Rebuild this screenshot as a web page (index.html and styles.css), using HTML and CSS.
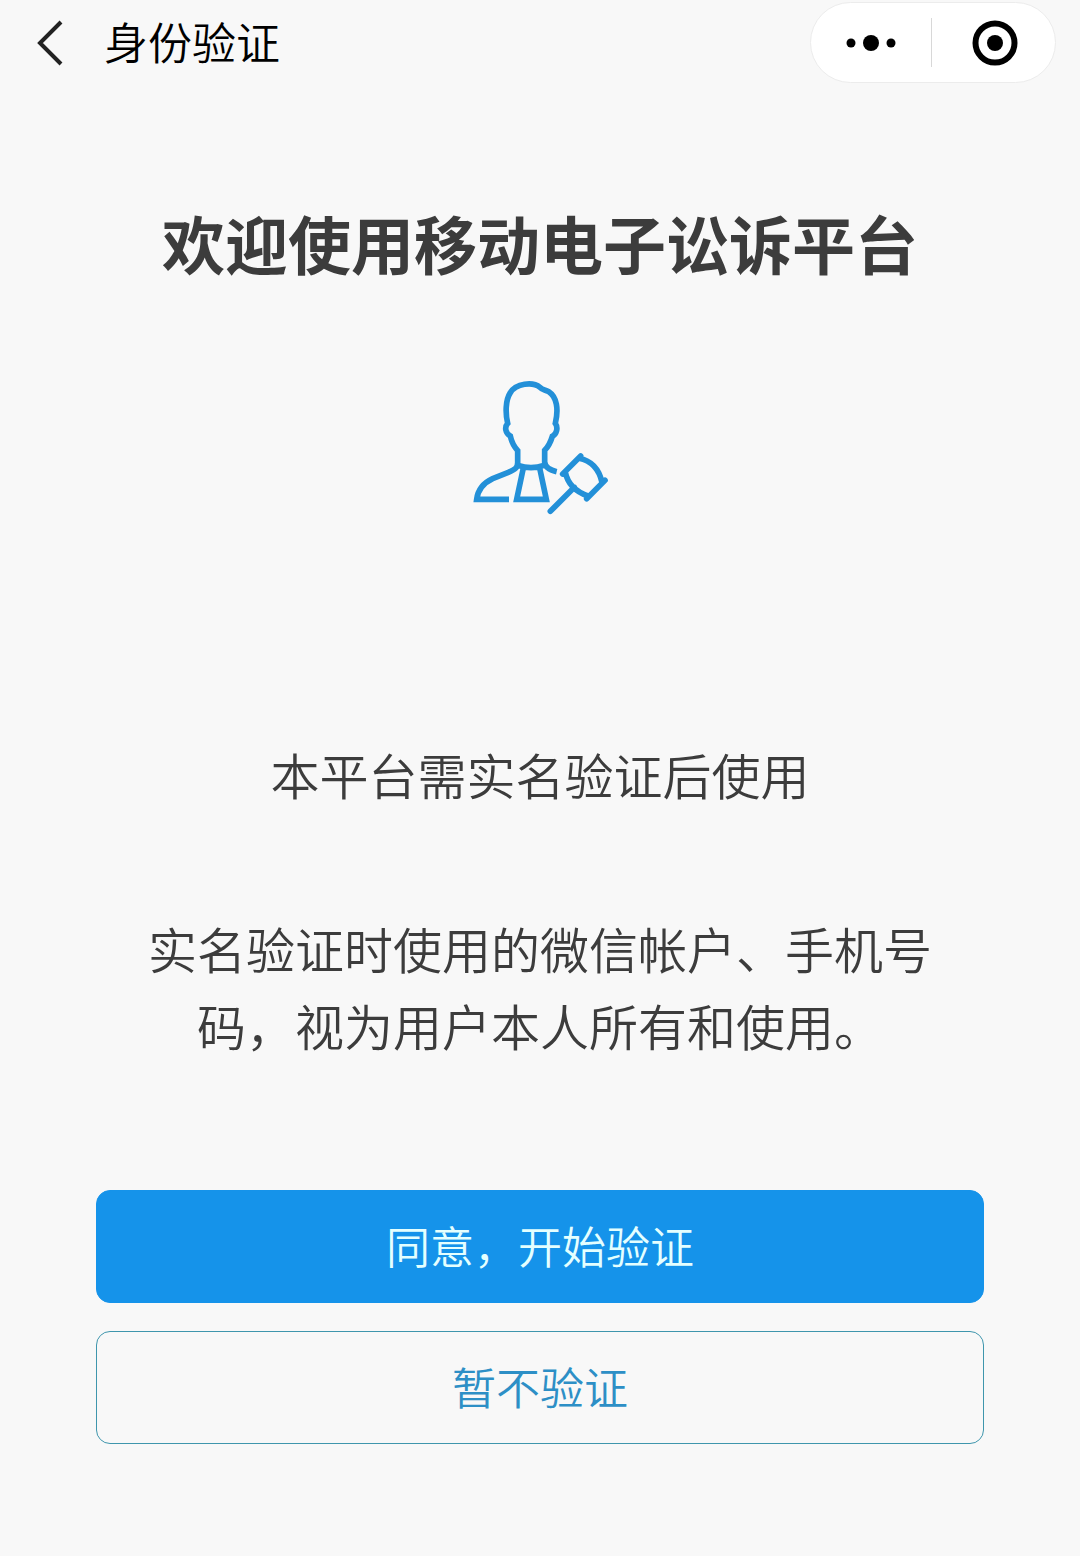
FILE: index.html
```
<!DOCTYPE html>
<html lang="zh-CN">
<head>
	<meta charset="utf-8">
	<meta name="viewport" content="width=device-width, initial-scale=1">
	<link rel="stylesheet" href="styles.css">
	<title>身份验证</title>
</head>
<body>
	<header class="navbar">
		<a class="back" href="#" aria-label="返回">
			<svg width="28" height="46" viewBox="0 0 28 46"><path d="M25 2L4 23L25 44"/></svg>
		</a>
		<span class="navbar-title">身份验证</span>
		<div class="capsule">
			<button type="button" aria-label="更多">
				<svg width="50" height="46" viewBox="0 0 50 46">
					<circle cx="5" cy="23" r="4.5"/>
					<circle cx="25" cy="23" r="8"/>
					<circle cx="45" cy="23" r="4.5"/>
				</svg>
			</button>
			<button type="button" aria-label="关闭">
				<svg width="46" height="46" viewBox="0 0 46 46">
					<circle class="ring" cx="23" cy="23" r="19.5"/>
					<circle cx="23" cy="23" r="8"/>
				</svg>
			</button>
		</div>
	</header>
	<main class="content">
		<h1>欢迎使用移动电子讼诉平台</h1>
		<svg class="judge" width="136" height="136" viewBox="36 30 408 408">
			<!-- head and shoulders -->
			<path d="M147 388H50C54 358 70 339 98 326L145 307C164 299 173 294 173 278V242C160 227 154 213 151 198C136 190 133 171 143 160C136 130 136 91 151 68C168 40 218 34 240 52C248 61 255 58 266 65C291 81 296 118 286 160C295 173 290 193 277 199C271 219 265 230 254 241V276C255 293 269 300 290 305"/>
			<!-- collar -->
			<path d="M174 286Q213 300 252 286M190 294L170 388H259L239 294"/>
			<!-- gavel -->
			<path class="gavel" d="M308 312L362 258M380 386L435 331M316 307Q326 357 384 378M357 265Q412 276 426 337M343 352L271 424"/>
		</svg>
		<p class="lead">本平台需实名验证后使用</p>
		<p class="notice">实名验证时使用的微信帐户、手机号码，视为用户本人所有和使用。</p>
		<div class="actions">
			<button type="button" class="btn btn-primary">同意，开始验证</button>
			<button type="button" class="btn btn-outline">暂不验证</button>
		</div>
	</main>
</body>
</html>
```
FILE: styles.css
```
*{
	box-sizing: border-box;
}
body{
	margin: 0;
	background-color: #f8f8f8;
	color: #3c3c3c;
	font-family: 'Noto Sans CJK SC', sans-serif;
	font-weight: 350;
}
button{
	font: inherit;
	cursor: pointer;
}
.navbar{
	display: flex;
	align-items: center;
	padding: 2px 24px 0 36px;
	color: #000;
}
.back{
	display: flex;
}
.back path{
	fill: none;
	stroke: #222;
	stroke-width: 4;
}
.navbar-title{
	margin-left: 40px;
	padding-bottom: 4px;
	font-size: 44px;
	line-height: 64px;
}
.capsule{
	display: flex;
	width: 246px;
	height: 81px;
	margin-left: auto;
	border: 1px solid #ececec;
	border-radius: 41px;
	background-color: #fff;
}
.capsule button{
	display: flex;
	flex: 1;
	align-items: center;
	justify-content: center;
	position: relative;
	padding: 0;
	border: 0;
	background: none;
}
.capsule button + button{
	padding-left: 5px;
}
.capsule button + button::before{
	content: '';
	position: absolute;
	left: 0;
	top: 15px;
	bottom: 15px;
	width: 1px;
	background-color: #d8d8d8;
}
.capsule .ring{
	fill: none;
	stroke: #000;
	stroke-width: 6;
}
.content{
	display: flex;
	flex-direction: column;
	align-items: center;
	padding: 121px 96px 112px;
	text-align: center;
}
h1{
	margin: 0;
	font-size: 63px;
	font-weight: bold;
	line-height: 76px;
}
.judge{
	margin-top: 100px;
	fill: none;
	stroke: #2390d8;
	stroke-width: 17;
}
.judge .gavel{
	stroke-linecap: round;
}
.lead, .notice{
	margin: 0;
	font-size: 49px;
	line-height: 77px;
}
.lead{
	margin-top: 219px;
}
.notice{
	margin-top: 97px;
	padding: 0 48px;
}
.actions{
	display: flex;
	flex-direction: column;
	gap: 28px;
	align-self: stretch;
	margin-top: 127px;
}
.btn{
	height: 113px;
	padding: 0 0 3px;
	border: 1px solid #1593ea;
	border-radius: 14px;
	font-size: 44px;
}
.btn-primary{
	background-color: #1593ea;
	color: #e4ffff;
}
.btn-outline{
	border-color: #3f96ad;
	background: none;
	color: #2d8fc6;
}
```
